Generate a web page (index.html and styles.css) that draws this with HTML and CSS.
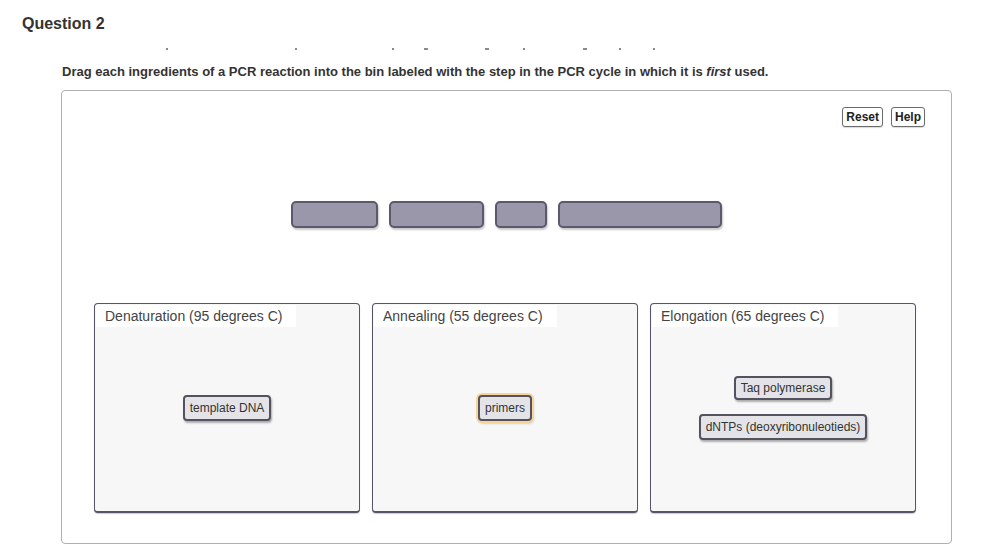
FILE: index.html
```html
<!DOCTYPE html>
<html>
<head>
<meta charset="utf-8">
<link rel="stylesheet" href="styles.css">
</head>
<body>
<div class="page">
  <h1 class="title">Question 2</h1>
  <div class="cutline" aria-hidden="true">
    <span class="mk" style="margin-left:104px"></span>
    <span class="mk" style="margin-left:127px"></span>
    <span class="mk" style="margin-left:95px"></span>
    <span class="mk mk-w" style="margin-left:30px"></span>
    <span class="mk mk-w" style="margin-left:57px"></span>
    <span class="mk" style="margin-left:34px"></span>
    <span class="mk mk-w" style="margin-left:58px"></span>
    <span class="mk" style="margin-left:32px"></span>
    <span class="mk" style="margin-left:32px"></span>
  </div>
  <p class="prompt">Drag each ingredients of a PCR reaction into the bin labeled with the step in the PCR cycle in which it is <em>first</em> used.</p>
  <div class="panel">
    <div class="toolbar">
      <button class="tbtn">Reset</button>
      <button class="tbtn">Help</button>
    </div>
    <div class="slots">
      <div class="slot" style="width:87px"></div>
      <div class="slot" style="width:95px"></div>
      <div class="slot" style="width:52px"></div>
      <div class="slot" style="width:164px"></div>
    </div>
    <div class="bins">
      <div class="bin">
        <div class="bin-label">Denaturation (95 degrees C)</div>
        <div class="bin-area">
          <div class="chip chip-tall">template DNA</div>
        </div>
      </div>
      <div class="bin">
        <div class="bin-label">Annealing (55 degrees C)</div>
        <div class="bin-area">
          <div class="chip chip-tall chip-focus">primers</div>
        </div>
      </div>
      <div class="bin">
        <div class="bin-label">Elongation (65 degrees C)</div>
        <div class="bin-area">
          <div class="chip">Taq polymerase</div>
          <div class="chip chip-tall">dNTPs (deoxyribonuleotieds)</div>
        </div>
      </div>
    </div>
  </div>
</div>
</body>
</html>
```
FILE: styles.css
```css
html, body {
  margin: 0;
  padding: 0;
  background: #ffffff;
  font-family: "Liberation Sans", Arial, sans-serif;
  color: #333333;
}

.page {
  padding-top: 14px;
}

.title {
  margin: 0 0 0 22px;
  font-size: 16px;
  line-height: 20px;
  font-weight: bold;
  color: #333333;
}

.cutline {
  margin: 14px 0 0 62px;
  height: 3px;
  display: flex;
  align-items: flex-start;
}

.mk {
  display: block;
  width: 2px;
  height: 2px;
  background: #8a8a8a;
}

.mk-w {
  width: 4px;
}

.prompt {
  margin: 13px 0 0 62px;
  font-size: 13px;
  line-height: 16px;
  font-weight: bold;
  color: #333333;
}

.prompt em {
  font-style: italic;
}

.panel {
  margin: 10px 0 0 61px;
  width: 889px;
  height: 452px;
  border: 1px solid #b0b0b0;
  border-radius: 4px;
  display: flex;
  flex-direction: column;
}

.toolbar {
  display: flex;
  justify-content: flex-end;
  gap: 8px;
  padding: 16px 26px 0 0;
}

.tbtn {
  height: 20px;
  padding: 0 3px;
  margin: 0;
  background: #ffffff;
  border: 1px solid #6b6b6b;
  border-radius: 3px;
  box-shadow: 0 1px 1px rgba(0, 0, 0, 0.15);
  font-family: "Liberation Sans", Arial, sans-serif;
  font-size: 12px;
  font-weight: bold;
  color: #222222;
  line-height: 18px;
}

.slots {
  display: flex;
  justify-content: center;
  gap: 11px;
  margin-top: 74px;
}

.slot {
  height: 27px;
  box-sizing: border-box;
  background: #9a97aa;
  border: 2px solid #5b596b;
  border-radius: 5px;
  box-shadow: 1px 2px 2px rgba(0, 0, 0, 0.22);
}

.bins {
  display: flex;
  gap: 12px;
  margin-top: 75px;
  padding-left: 32px;
}

.bin {
  width: 266px;
  height: 210px;
  box-sizing: border-box;
  background: #f7f7f7;
  border: 1px solid #56546a;
  border-bottom-width: 2px;
  border-radius: 4px;
  box-shadow: 0 1px 1px rgba(0, 0, 0, 0.2);
  display: flex;
  flex-direction: column;
  align-items: flex-start;
}

.bin-label {
  margin: 1px 0 0 1px;
  background: #ffffff;
  padding: 3px 14px 2px 9px;
  font-size: 14px;
  line-height: 17px;
  color: #444444;
}

.bin-area {
  flex: 1;
  align-self: stretch;
  display: flex;
  flex-direction: column;
  align-items: center;
  justify-content: center;
  gap: 14px;
  padding-bottom: 23px;
}

.chip {
  height: 24px;
  box-sizing: border-box;
  padding: 0 5px;
  background: #e4e4e8;
  border: 2px solid #54525f;
  border-radius: 4px;
  box-shadow: 1px 2px 2px rgba(0, 0, 0, 0.3);
  font-size: 12px;
  line-height: 20px;
  color: #333333;
  white-space: nowrap;
}

.chip-tall {
  height: 26px;
  line-height: 22px;
}

.chip-focus {
  box-shadow: 0 0 0 2px #f8d594, 1px 2px 3px rgba(0, 0, 0, 0.3);
}
```
